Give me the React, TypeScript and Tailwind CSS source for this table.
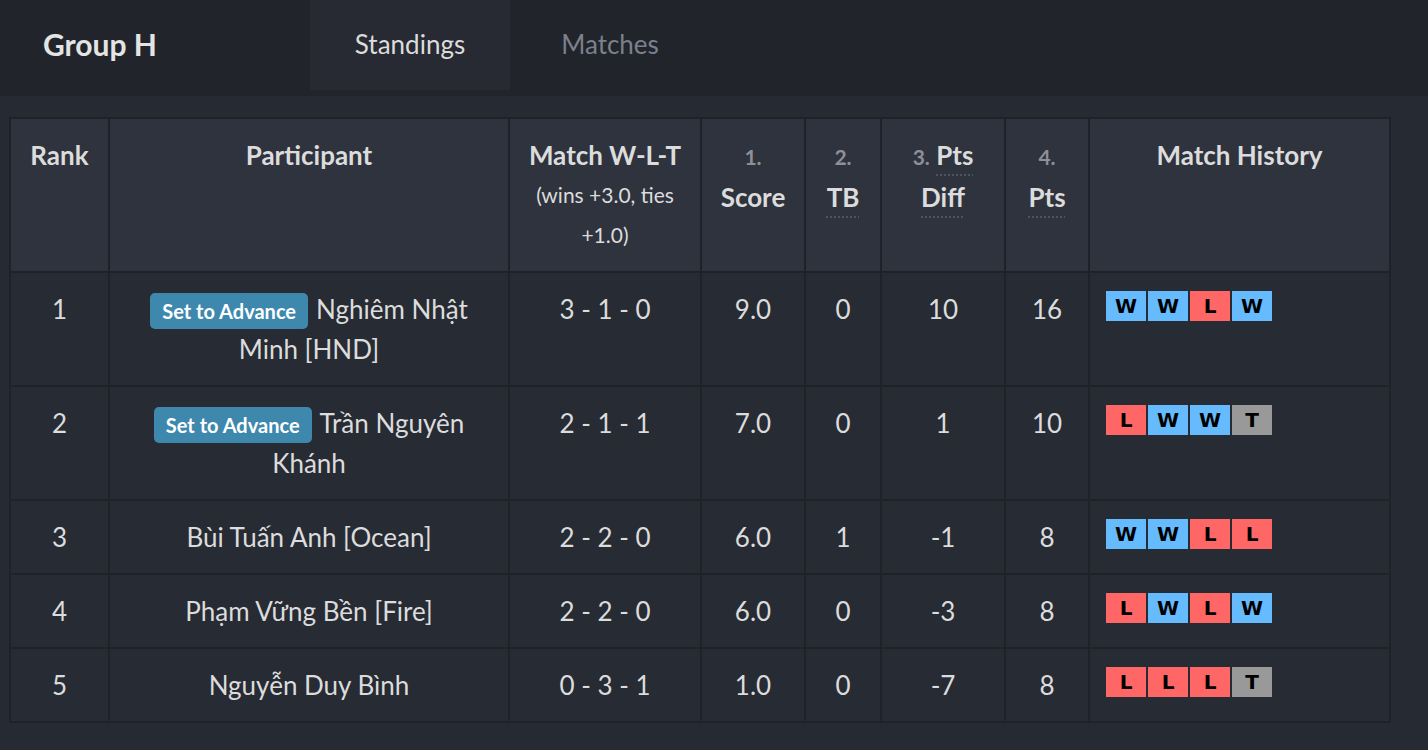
import React from 'react';

type Result = 'W' | 'L' | 'T';

interface Row {
  rank: number;
  advance: boolean;
  name: string;
  wlt: string;
  score: string;
  tb: string;
  diff: string;
  pts: string;
  history: Result[];
}

const rows: Row[] = [
  { rank: 1, advance: true, name: 'Nghiêm Nhật Minh [HND]', wlt: '3 - 1 - 0', score: '9.0', tb: '0', diff: '10', pts: '16', history: ['W', 'W', 'L', 'W'] },
  { rank: 2, advance: true, name: 'Trần Nguyên Khánh', wlt: '2 - 1 - 1', score: '7.0', tb: '0', diff: '1', pts: '10', history: ['L', 'W', 'W', 'T'] },
  { rank: 3, advance: false, name: 'Bùi Tuấn Anh [Ocean]', wlt: '2 - 2 - 0', score: '6.0', tb: '1', diff: '-1', pts: '8', history: ['W', 'W', 'L', 'L'] },
  { rank: 4, advance: false, name: 'Phạm Vững Bền [Fire]', wlt: '2 - 2 - 0', score: '6.0', tb: '0', diff: '-3', pts: '8', history: ['L', 'W', 'L', 'W'] },
  { rank: 5, advance: false, name: 'Nguyễn Duy Bình', wlt: '0 - 3 - 1', score: '1.0', tb: '0', diff: '-7', pts: '8', history: ['L', 'L', 'L', 'T'] },
];

const badgeColor: Record<Result, string> = {
  W: 'bg-[#66bbff]',
  L: 'bg-[#ff6666]',
  T: 'bg-[#999999]',
};

const th = 'border-2 border-[#1f2228] bg-[#2f333e] px-4 py-4 align-top text-center font-bold';
const td = 'border-2 border-[#1f2228] bg-[#272b34] px-4 py-4 align-top text-center';
const abbr = 'underline decoration-dotted decoration-[#4f535c] decoration-2 underline-offset-[9px]';

const Num = ({ n }: { n: string }) => <span className="text-[21px] text-[#8d9099]">{n}</span>;

const App = () => {
  return (
    <div
      className="min-h-screen bg-[#262a33] text-[#dcdcdc] text-[26px] leading-[40px]"
      style={{ fontFamily: 'Lato, "Noto Sans", sans-serif' }}
    >
      {/* tab bar */}
      <div className="flex h-[96px] bg-[#21242b]">
        <div className="flex h-[90px] w-[310px] items-center pb-[3px] pl-[43px] text-[30px] font-bold text-[#e4e4e4]">
          Group H
        </div>
        <div className="flex h-[90px] w-[200px] items-center justify-center bg-[#272a32] pb-[3px] text-[#dcdcdc]">
          Standings
        </div>
        <div className="flex h-[90px] w-[200px] items-center justify-center pb-[3px] text-[#7b808b]">
          Matches
        </div>
      </div>

      <table className="ml-[9px] mt-[21px] w-[1380px] table-fixed border-collapse">
        <thead>
          <tr>
            <th className={`${th} w-[99px]`}>Rank</th>
            <th className={`${th} w-[400px]`}>Participant</th>
            <th className={`${th} w-[192px]`}>
              Match W-L-T
              <div className="text-[21px] font-normal">
                (wins +3.0, ties
                <br />
                +1.0)
              </div>
            </th>
            <th className={`${th} w-[104px]`}>
              <Num n="1." />
              <br />
              Score
            </th>
            <th className={`${th} w-[76px]`}>
              <Num n="2." />
              <br />
              <abbr className={abbr} title="Tiebreaker">TB</abbr>
            </th>
            <th className={`${th} w-[124px]`}>
              <Num n="3." />{' '}
              <abbr className={abbr} title="Points Difference">
                Pts
                <br />
                Diff
              </abbr>
            </th>
            <th className={`${th} w-[84px]`}>
              <Num n="4." />
              <br />
              <abbr className={abbr} title="Points">Pts</abbr>
            </th>
            <th className={`${th} w-[301px]`}>Match History</th>
          </tr>
        </thead>
        <tbody>
          {rows.map((r) => (
            <tr key={r.rank}>
              <td className={td}>{r.rank}</td>
              <td className={td}>
                {r.advance && (
                  <span className="mr-[8px] inline-block rounded-[5px] bg-[#3e88ae] px-[12px] pb-[6px] pt-[6px] align-[0px] text-[20px] font-bold leading-[24px] text-white">
                    Set to Advance
                  </span>
                )}
                {r.name}
              </td>
              <td className={td}>{r.wlt}</td>
              <td className={td}>{r.score}</td>
              <td className={td}>{r.tb}</td>
              <td className={td}>{r.diff}</td>
              <td className={td}>{r.pts}</td>
              <td className={`${td} text-left`}>
                <div className="mt-[2px] flex gap-[2px]">
                  {r.history.map((h, i) => (
                    <span
                      key={i}
                      className={`flex h-[30px] w-[40px] items-center justify-center text-[20px] font-bold leading-none text-black ${badgeColor[h]}`}
                      style={{ fontFamily: '"DejaVu Sans", sans-serif' }}
                    >
                      {h}
                    </span>
                  ))}
                </div>
              </td>
            </tr>
          ))}
        </tbody>
      </table>
    </div>
  );
};

export default App;
